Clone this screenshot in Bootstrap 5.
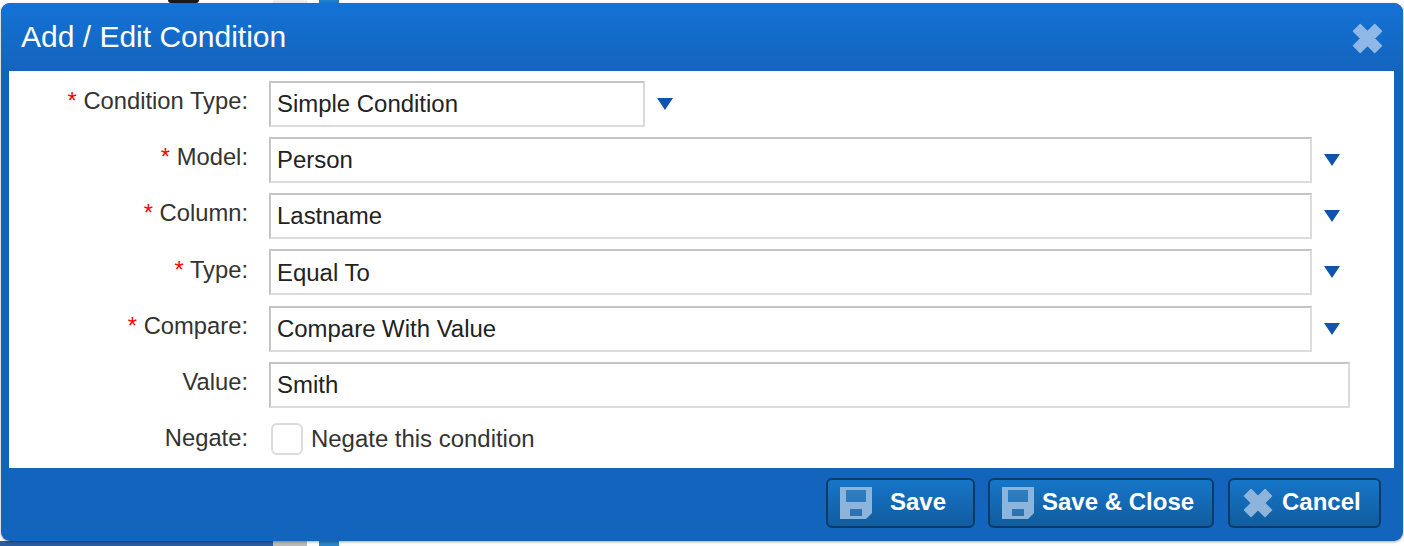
<!DOCTYPE html>
<html lang="en"><head><meta charset="utf-8"><title>Add / Edit Condition</title>
<link href="https://cdn.jsdelivr.net/npm/bootstrap@5.3.0/dist/css/bootstrap.min.css" rel="stylesheet">
<style>
html,body{height:546px;overflow:hidden;background:#fff;font-family:"Liberation Sans",Arial,sans-serif;color:#333}
.bg-bit{position:absolute;z-index:0}
.bg-a{left:168px;top:0;width:31px;height:3px;background:#1a1a1a;border-radius:0 0 6px 6px}
.bg-b{left:273px;top:0;width:34px;height:3px;background:#eee}
.bg-b2{left:273px;top:541px;width:34px;height:5px;background:#bbb}
.bg-c{left:319px;top:0;width:20px;height:3px;background:#1b7fd0}
.bg-c2{left:319px;top:541px;width:20px;height:5px;background:#2b85c9}
.bg-d{left:0;top:541px;width:273px;height:5px;background:#2a5d9f}
.dlg{position:relative;z-index:1;margin:3px 1px 0 1px;height:538px;background:#1364bd;border-radius:9px;padding:0 9px 0 8px;box-shadow:0 1px 3px rgba(0,0,0,.35)}
.dlg-head{height:68px;margin:0 -9px 0 -8px;padding:0 20px;background:linear-gradient(#1472d6,#1364bd);border-radius:9px 9px 0 0}
.dlg-title{font-size:30px;color:#fff;font-weight:400;margin:0;line-height:1}
.dlg-x{width:31px;height:31px;margin-top:2px}
.dlg-body{height:397px;background:#fff;padding-top:10px}
.frow{height:46px;margin-bottom:10.15px}
.flabel{width:239px;flex:none;text-align:right;font-size:23.75px;line-height:1;padding-bottom:6px}
.flabel b{color:#f00;font-weight:400}
.fbox{margin-left:21px;height:46px;border:2px solid;border-color:#c4c4c4 #dcdcdc #dcdcdc #c4c4c4;padding:.25px 6px 0;font-size:23.95px;line-height:1;color:#222;background:#fff}
.w-short{width:376px}.w-mid{width:1043px}.w-full{width:1081px}
.caret-ico{width:16px;height:12px;margin-left:12px}
.chk-row{height:40px;padding-top:2px}
.chk-row .flabel{padding-bottom:1px}
.chk{margin-left:23px;width:32px;height:32px;border:2px solid #dcdcdc;border-radius:6px;background:#fff}
.chk-text{font-size:23.95px;margin-left:8px;color:#333;line-height:1;padding-top:1px}
.dlg-foot{height:73px;padding:10px 13px 0 0}
.act{height:50px;border:2px solid #0a3a66;border-radius:6px;background:linear-gradient(#1676c8,#115c9e);color:#fff;font-weight:700;font-size:24px;padding:0;line-height:1}
.act:hover{color:#fff}
.act svg{flex:none}
.act span{padding-bottom:2px}
.a1{width:149px;padding-left:12px}.a1 span{margin-left:18px}
.a2{width:226px;padding-left:12px;margin-left:13px}.a2 span{margin-left:8px}
.a3{width:153px;padding-left:13px;margin-left:14px}.a3 span{margin-left:9px}
</style></head>
<body>
<div class="bg-bit bg-a"></div><div class="bg-bit bg-b"></div><div class="bg-bit bg-b2"></div><div class="bg-bit bg-c"></div><div class="bg-bit bg-c2"></div><div class="bg-bit bg-d"></div>
<div class="dlg">
 <div class="dlg-head d-flex align-items-center justify-content-between">
  <h1 class="dlg-title">Add / Edit Condition</h1>
  <svg class="dlg-x" viewBox="0 0 30 30"><path d="M8 1.5 15 8.5 22 1.5 28.5 8 21.5 15 28.5 22 22 28.5 15 21.5 8 28.5 1.5 22 8.5 15 1.5 8Z" fill="#8fb8e6" stroke="#8fb8e6" stroke-width="1.5" stroke-linejoin="round"/></svg>
 </div>
 <div class="dlg-body">
  <div class="frow d-flex align-items-center"><div class="flabel"><b>*</b> Condition Type:</div><div class="fbox w-short d-flex align-items-center">Simple Condition</div><svg class="caret-ico" viewBox="0 0 16 12"><path d="M0 0H16L8 12Z" fill="#1153ad"/></svg></div>
  <div class="frow d-flex align-items-center"><div class="flabel"><b>*</b> Model:</div><div class="fbox w-mid d-flex align-items-center">Person</div><svg class="caret-ico" viewBox="0 0 16 12"><path d="M0 0H16L8 12Z" fill="#1153ad"/></svg></div>
  <div class="frow d-flex align-items-center"><div class="flabel"><b>*</b> Column:</div><div class="fbox w-mid d-flex align-items-center">Lastname</div><svg class="caret-ico" viewBox="0 0 16 12"><path d="M0 0H16L8 12Z" fill="#1153ad"/></svg></div>
  <div class="frow d-flex align-items-center"><div class="flabel"><b>*</b> Type:</div><div class="fbox w-mid d-flex align-items-center">Equal To</div><svg class="caret-ico" viewBox="0 0 16 12"><path d="M0 0H16L8 12Z" fill="#1153ad"/></svg></div>
  <div class="frow d-flex align-items-center"><div class="flabel"><b>*</b> Compare:</div><div class="fbox w-mid d-flex align-items-center">Compare With Value</div><svg class="caret-ico" viewBox="0 0 16 12"><path d="M0 0H16L8 12Z" fill="#1153ad"/></svg></div>
  <div class="frow d-flex align-items-center"><div class="flabel">Value:</div><div class="fbox w-full d-flex align-items-center">Smith</div></div>
  <div class="chk-row d-flex align-items-center"><div class="flabel">Negate:</div><div class="chk"></div><div class="chk-text">Negate this condition</div></div>
 </div>
 <div class="dlg-foot d-flex justify-content-end">
  <button type="button" class="btn act a1 d-flex align-items-center"><svg width="32" height="32" viewBox="0 0 32 32"><path fill-rule="evenodd" d="M0 0H32V26L26 32H0ZM6 3V15H26V3ZM10 22V29H22V22Z" fill="#8db4da"/><path d="M6 3H26V15H6ZM10 22H22V29H10Z" fill="#fff" opacity=".1"/></svg><span>Save</span></button>
  <button type="button" class="btn act a2 d-flex align-items-center"><svg width="32" height="32" viewBox="0 0 32 32"><path fill-rule="evenodd" d="M0 0H32V26L26 32H0ZM6 3V15H26V3ZM10 22V29H22V22Z" fill="#8db4da"/><path d="M6 3H26V15H6ZM10 22H22V29H10Z" fill="#fff" opacity=".1"/></svg><span>Save &amp; Close</span></button>
  <button type="button" class="btn act a3 d-flex align-items-center"><svg width="30" height="30" viewBox="0 0 30 30"><path d="M8 1.5 15 8.5 22 1.5 28.5 8 21.5 15 28.5 22 22 28.5 15 21.5 8 28.5 1.5 22 8.5 15 1.5 8Z" fill="#8db4da" stroke="#8db4da" stroke-width="1.5" stroke-linejoin="round"/></svg><span>Cancel</span></button>
 </div>
</div>
</body></html>
